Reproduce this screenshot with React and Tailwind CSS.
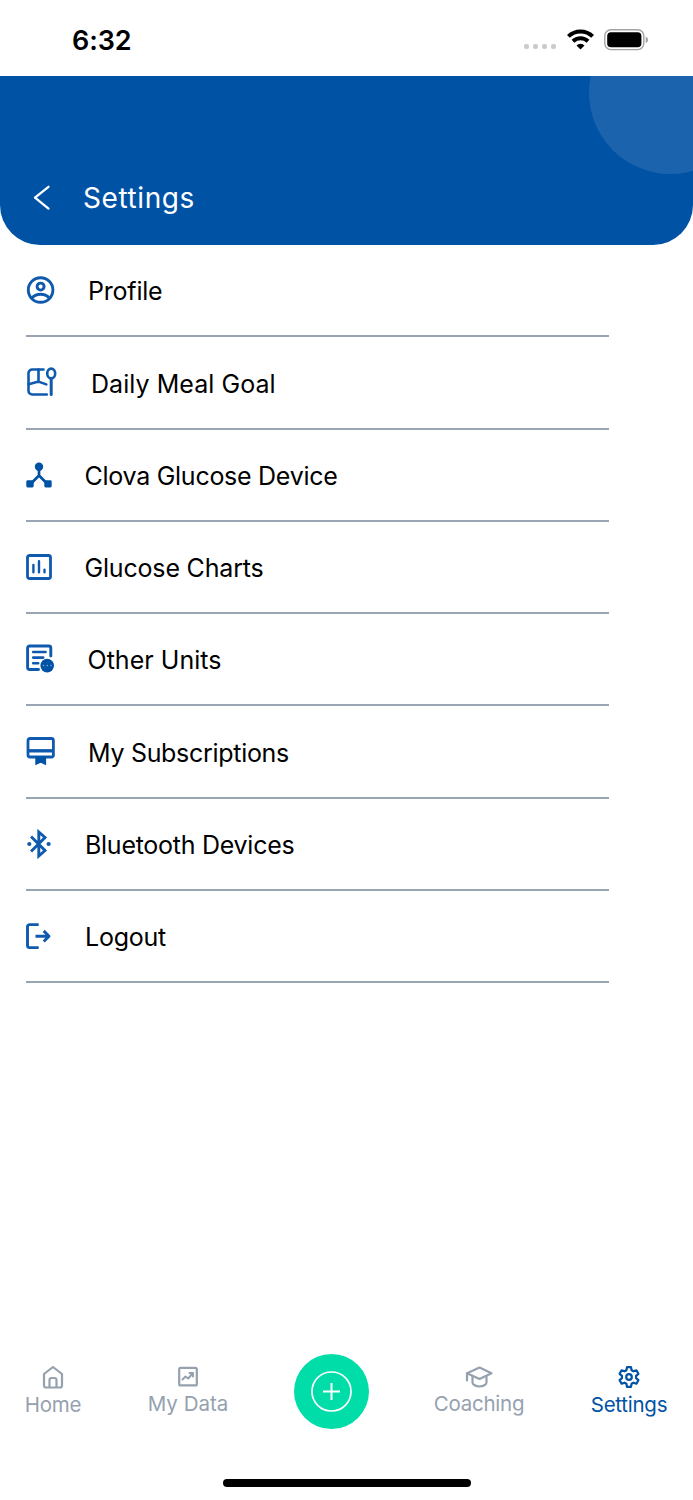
import React from "react";

const BLUE = "#0f5aae";

const stroke = (width = 2) => ({
  fill: "none",
  stroke: "currentColor",
  strokeWidth: width,
  strokeLinecap: "round",
  strokeLinejoin: "round",
});

const ProfileIcon = () => (
  <svg width="30" height="30" viewBox="0 0 30 30" {...stroke(2.9)}>
    <circle cx="14.6" cy="15" r="12.3" />
    <circle cx="14.6" cy="11.6" r="3.5" />
    <path d="M6 22.800c2.200-2.300 5.200-3.600 8.600-3.600s6.400 1.300 8.600 3.600" />
  </svg>
);

const MealIcon = () => (
  <svg width="32" height="32" viewBox="0 0 32 32" {...stroke(2.6)}>
    <path d="M17.500 3.500H6.200A3.700 3.700 0 0 0 2.500 7.200v17.600a3.700 3.700 0 0 0 3.700 3.700h14.600" />
    <path d="M12.500 3.500v12.500M2.800 18.200l9.700-2.600 7.800 2.800" />
    <ellipse cx="25.200" cy="7.500" rx="4" ry="4.900" />
    <path d="M25.200 12.500v16" strokeWidth="3" />
  </svg>
);

const HubIcon = () => (
  <svg width="26" height="28" viewBox="0 0 26 28" fill="#0052a5">
    <circle cx="13" cy="5.700" r="4.200" />
    <path d="M13 7v9M13 14.500l-8.500 8.500M13 14.500l8.500 8.500" fill="none" stroke="#0052a5" strokeWidth="2.700" />
    <rect x="0.300" y="19.300" width="7.400" height="7.200" rx="1.400" />
    <rect x="18.300" y="19.300" width="7.400" height="7.200" rx="1.400" />
  </svg>
);

const ChartIcon = () => (
  <svg width="26" height="26" viewBox="0 0 26 26" {...stroke(2.8)}>
    <rect x="1.500" y="1.500" width="23" height="23" rx="2" />
    <path d="M7.400 11v7.300M13 7.300v11M18.500 15.700v2.600" strokeWidth="2.400" />
  </svg>
);

const UnitsIcon = () => (
  <svg width="30" height="30" viewBox="0 0 30 30" {...stroke(2.9)}>
    <path d="M12.500 25.500H3.600a2 2 0 0 1-2-2V4a2 2 0 0 1 2-2h19.200a2 2 0 0 1 2 2v8" />
    <path d="M7.200 8h12.400M7.200 13.600h10M7.200 19.200h5" strokeWidth="2.600" />
    <circle cx="21.200" cy="21.600" r="6.800" fill="#0052a5" stroke="none" />
    <path d="M17.500 21.600h.1M21.200 21.600h.1M24.900 21.600h.1" stroke="#7fa8d6" strokeWidth="1.500" />
  </svg>
);

const SubscriptionIcon = () => (
  <svg width="30" height="30" viewBox="0 0 30 30" {...stroke(2.800)}>
    <rect x="2" y="2.500" width="25.400" height="18.500" rx="2" />
    <path d="M2 14.800h25" strokeLinecap="butt" strokeWidth="3.400" />
    <path d="M9.300 20.500h10.800v8.700l-5.400-2.500-5.400 2.500z" fill="#0052a5" stroke="none" />
  </svg>
);

const BluetoothIcon = () => (
  <svg width="26" height="30" viewBox="0 0 26 30" {...stroke(2.900)}>
    <path d="M5 7.500l14 14-6.200 5.500V3l6.200 5.500-14 14" strokeLinecap="butt" strokeLinejoin="miter" />
    <circle cx="3.300" cy="15" r="2.100" fill="currentColor" stroke="none" />
    <circle cx="22.600" cy="15" r="2.100" fill="currentColor" stroke="none" />
  </svg>
);

const LogoutIcon = () => (
  <svg width="26" height="28" viewBox="0 0 26 28" {...stroke(2.900)}>
    <path d="M12.700 2.600H3.500a2 2 0 0 0-2 2v19a2 2 0 0 0 2 2h9.200" strokeLinecap="butt" />
    <path d="M9.500 14.200h13M17.700 8.900l5.300 5.300-5.300 5.300" strokeLinecap="butt" />
  </svg>
);

const items = [
  { label: "Profile", icon: ProfileIcon, pad: "pl-[62px]", tracking: "tracking-[-0.2px]" },
  { label: "Daily Meal Goal", icon: MealIcon, pad: "pl-[65px]", tracking: "tracking-[0.05px]" },
  { label: "Clova Glucose Device", icon: HubIcon, pad: "pl-[58.5px]", tracking: "tracking-[-0.27px]" },
  { label: "Glucose Charts", icon: ChartIcon, pad: "pl-[58.5px]", tracking: "tracking-[-0.18px]" },
  { label: "Other Units", icon: UnitsIcon, pad: "pl-[61.5px]", tracking: "tracking-[0.03px]" },
  { label: "My Subscriptions", icon: SubscriptionIcon, pad: "pl-[62px]", tracking: "tracking-[-0.3px]" },
  { label: "Bluetooth Devices", icon: BluetoothIcon, pad: "pl-[59px]", tracking: "tracking-[-0.27px]" },
  { label: "Logout", icon: LogoutIcon, pad: "pl-[59px]", tracking: "tracking-[-0.25px]" },
];

const StatusBar = () => (
  <div className="flex h-[76px] items-start justify-between pl-[72px] pr-[44px] pt-[24px]">
    <span className="text-[27px] font-semibold leading-[34px] tracking-[-0.1px]">6:32</span>
    <div className="flex items-center pt-[4.5px]">
      <div className="mr-[11px] mt-[14px] flex gap-[3.500px]">
        {[0, 1, 2, 3].map((i) => (
          <span key={i} className="h-[5.500px] w-[5.500px] rounded-[2px] bg-[#cbcbcb]" />
        ))}
      </div>
      <svg width="27" height="21" viewBox="0 0 27 21" fill="none" stroke="#000" strokeWidth="4">
        <path d="M1.400 7.400a17.200 17.200 0 0 1 24.200 0" />
        <path d="M6 12.300a10.800 10.800 0 0 1 15 0" />
        <path d="M13.500 20.500l-4-4.100a5.800 5.800 0 0 1 8 0z" fill="#000" stroke="none" />
      </svg>
      <svg className="ml-[10px]" width="45" height="22" viewBox="0 0 45 22">
        <rect x="0.800" y="0.800" width="39" height="19.800" rx="6" fill="none" stroke="#a3a3a3" strokeWidth="1.400" />
        <rect x="3.200" y="3.200" width="34.200" height="15" rx="3.800" fill="#000" />
        <path d="M41.700 7.500c1.700.8 2.300 1.900 2.300 3.300s-.6 2.500-2.300 3.300z" fill="#a3a3a3" />
      </svg>
    </div>
  </div>
);

const Header = () => (
  <header className="relative h-[169px] overflow-hidden rounded-b-[40px] bg-[#0052a5] text-white">
    <div className="absolute -top-[65px] left-[589px] h-[163px] w-[163px] rounded-full bg-[#1c63ae]" />
    <div className="flex items-center pl-[33px] pt-[101px]">
      <svg width="18" height="26" viewBox="0 0 18 26" {...stroke(2.300)}>
        <path d="M15.500 1.800L2 12.700l13.500 10.900" />
      </svg>
      <h1 className="pl-[32px] pt-px text-[28px] font-normal leading-[40px] tracking-[0.600px]">Settings</h1>
    </div>
  </header>
);

const Tab = ({ label, className, children }) => (
  <div className={`flex flex-col items-center whitespace-nowrap text-[20.500px] leading-[26px] ${className}`}>
    {children}
    <span>{label}</span>
  </div>
);

const TabBar = () => (
  <nav className="flex h-[75px] items-start text-[#95a1af]">
    <Tab label="Home" className="ml-[20px] w-[66px] pt-[11px] tracking-[-0.200px]">
      <svg width="22" height="24" viewBox="0 0 22 24" className="mb-[3px]" {...stroke(2.200)}>
        <path d="M2 9l9-7 9 7v11.500a2 2 0 0 1-2 2H4a2 2 0 0 1-2-2z" />
        <path d="M7.500 22v-7a2 2 0 0 1 2-2h3a2 2 0 0 1 2 2v7" />
      </svg>
    </Tab>
    <Tab label="My Data" className="ml-[57px] w-[90px] pt-[12px]">
      <svg width="20" height="22" viewBox="0 0 20 22" className="mb-[3px]" {...stroke(2.200)}>
        <rect x="1.200" y="1.800" width="17.600" height="17.600" rx="1.500" />
        <path d="M4.500 13.500l3-3 2.700 2 4.300-5M11.500 7h3.500v3.500" strokeWidth="2" />
      </svg>
    </Tab>
    <button className="ml-[61px] flex h-[75px] w-[75px] items-center justify-center rounded-full bg-[#00dda8] text-white">
      <svg width="42" height="42" viewBox="0 0 42 42" {...stroke(1.700)}>
        <circle cx="20.500" cy="20.500" r="19.500" />
        <path d="M20.500 12v17M12 20.500h17" strokeLinecap="butt" strokeWidth="2" />
      </svg>
    </button>
    <Tab label="Coaching" className="ml-[60px] w-[100px] pt-[12px] tracking-[-0.250px]">
      <svg width="28" height="22" viewBox="0 0 28 22" className="mb-[3px]" {...stroke(2.200)}>
        <path d="M2 7.200L14.500 1.500l12 5.700-12 5.700z" />
        <path d="M7.500 10.500v6c0 2 3.300 4 7 4s7-2 7-4v-6M2 7.500v7" />
      </svg>
    </Tab>
    <Tab label="Settings" className="ml-[57px] w-[86px] pt-[11px] tracking-[-0.250px] text-[#0052a5]">
      <svg width="24" height="24" viewBox="0 0 24 24" className="mb-[3px]" {...stroke(2.200)}>
        <path d="M10 2.200h4l.6 3 1.900 1.100 2.900-1 2 3.500-2.300 2v2.400l2.300 2-2 3.500-2.900-1-1.900 1.100-.6 3h-4l-.6-3-1.900-1.100-2.900 1-2-3.500 2.300-2v-2.400l-2.300-2 2-3.500 2.900 1 1.900-1.100z" />
        <circle cx="12" cy="12" r="2.800" />
      </svg>
    </Tab>
  </nav>
);

export default function App() {
  return (
    <div className="flex h-[1500px] w-[693px] flex-col overflow-hidden bg-white font-['Inter',sans-serif] text-black">
      <StatusBar />
      <Header />
      <ul className="ml-[26px] w-[583px]">
        {items.map(({ label, icon: Icon, pad, tracking }) => (
          <li key={label} className={`relative flex h-[92.280px] items-center border-b-2 border-[#9aa5b4] pt-1 ${pad}`}>
            <span className="absolute left-0 top-[45px] flex -translate-y-1/2" style={{ color: BLUE }}>
              <Icon />
            </span>
            <span className={`whitespace-nowrap text-[25px] ${tracking}`}>{label}</span>
          </li>
        ))}
      </ul>
      <div className="mt-auto">
        <TabBar />
        <div className="mx-auto mb-[13px] mt-[50px] h-[8px] w-[248px] rounded-full bg-black" />
      </div>
    </div>
  );
}
